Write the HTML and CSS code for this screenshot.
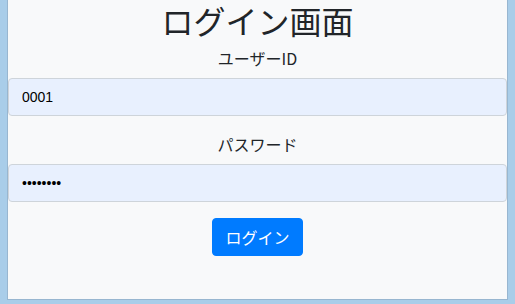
FILE: index.html
```html
<!DOCTYPE html>
<html lang="ja">
<head>
  <meta charset="UTF-8">
  <title>ログイン画面</title>
  <link rel="stylesheet" href="styles.css">
</head>
<body>
  <!-- Login panel -->
  <div class="panel">
    <h1>ログイン画面</h1>
    <form class="login-form" onsubmit="return false">
      <div class="form-group">
        <label for="userId">ユーザーID</label>
        <input type="text" id="userId" class="form-control" value="0001">
      </div>
      <div class="form-group">
        <label for="password">パスワード</label>
        <input type="password" id="password" class="form-control" value="password">
      </div>
      <button type="submit" class="btn-login">ログイン</button>
    </form>
  </div>
</body>
</html>
```

FILE: styles.css
```css
body { margin: 0; padding: 0; background: #a9cde9; font-family: "Noto Sans CJK JP", "Noto Sans", sans-serif; color: #212529; }
.panel { margin: 0 7px; background: #f8f9fa; border: 1px solid #98b6d0; border-top: none; padding: 0 0 43px; text-align: center; }
.panel h1 { margin: 0 0 8px; padding-top: 3px; font-size: 32px; font-weight: 400; line-height: 35px; }
.login-form { margin: 0; }
.form-group { margin-bottom: 16px; }
.form-group label { display: block; margin-bottom: 8px; font-size: 16px; line-height: 24px; color: #212529; }

/* inputs look autofilled in the original */
.form-control {
  display: block;
  box-sizing: border-box;
  width: 100%;
  height: 38px;
  padding: 6px 13px;
  font-family: "Liberation Sans", Arial, sans-serif;
  font-size: 14px;
  color: #000;
  background: #e8f0fe;
  border: 1px solid #ced4da;
  border-radius: 4px;
}

.btn-login {
  display: inline-block;
  height: 38px;
  padding: 0 12px;
  font-family: "Noto Sans CJK JP", sans-serif;
  font-size: 16px;
  color: #fff;
  background: #007bff;
  border: 1px solid #007bff;
  border-radius: 4px;
  cursor: pointer;
}
```
